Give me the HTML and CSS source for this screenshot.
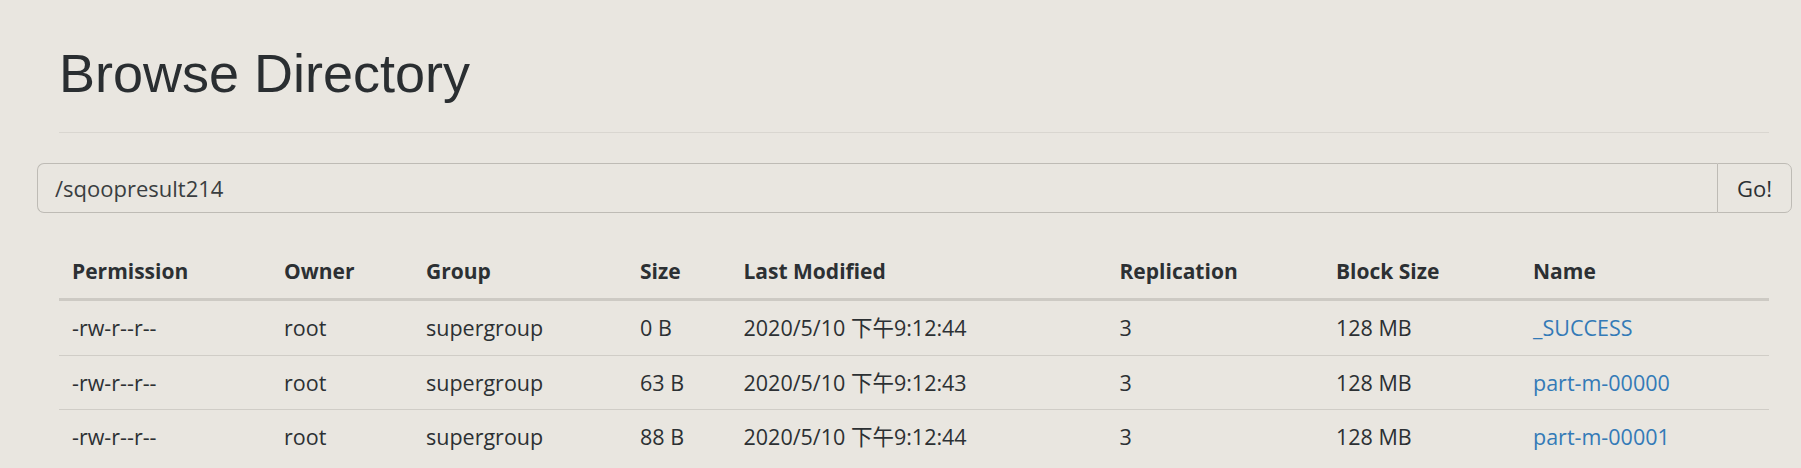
FILE: index.html
```html
<!DOCTYPE html>
<html lang="en">
<head>
<meta charset="utf-8">
<title>Browse Directory</title>
<link rel="stylesheet" href="styles.css">
</head>
<body>
<div class="page">
  <div class="page-header">
    <h1>Browse Directory</h1>
  </div>
  <form class="input-group">
    <input class="path-input" type="text" value="/sqoopresult214">
    <button class="go-btn" type="button">Go!</button>
  </form>
  <table class="listing">
    <colgroup>
      <col class="c-perm"><col class="c-owner"><col class="c-group"><col class="c-size">
      <col class="c-mod"><col class="c-repl"><col class="c-block"><col class="c-name">
    </colgroup>
    <thead>
      <tr>
        <th>Permission</th><th>Owner</th><th>Group</th><th>Size</th>
        <th>Last Modified</th><th>Replication</th><th>Block Size</th><th>Name</th>
      </tr>
    </thead>
    <tbody>
      <tr>
        <td>-rw-r--r--</td><td>root</td><td>supergroup</td><td>0 B</td>
        <td>2020/5/10 下午9:12:44</td><td>3</td><td>128 MB</td><td><a href="#">_SUCCESS</a></td>
      </tr>
      <tr>
        <td>-rw-r--r--</td><td>root</td><td>supergroup</td><td>63 B</td>
        <td>2020/5/10 下午9:12:43</td><td>3</td><td>128 MB</td><td><a href="#">part-m-00000</a></td>
      </tr>
      <tr>
        <td>-rw-r--r--</td><td>root</td><td>supergroup</td><td>88 B</td>
        <td>2020/5/10 下午9:12:44</td><td>3</td><td>128 MB</td><td><a href="#">part-m-00001</a></td>
      </tr>
    </tbody>
  </table>
</div>
</body>
</html>
```

FILE: styles.css
```css
html, body {
  margin: 0;
  padding: 0;
  background: #e9e6e0;
}

body {
  font-family: "Open Sans", "Noto Sans CJK SC", sans-serif;
  font-size: 21.5px;
  color: #2c3033;
}

.page {
  padding: 0 32px 0 59px;
}

.page-header {
  padding: 44px 0 28.6px;
  border-bottom: 1px solid #d9d6d0;
}

.page-header h1 {
  margin: 0;
  font-family: "Liberation Sans", Arial, sans-serif;
  font-weight: 400;
  font-size: 54px;
  line-height: 59.4px;
  color: #2a2e31;
}

.input-group {
  display: flex;
  margin: 30px -23px 0 -22px;
  height: 50px;
}

.path-input {
  flex: 1;
  min-width: 0;
  box-sizing: border-box;
  height: 50px;
  margin: 0;
  padding: 0 17px;
  border: 1px solid #bebbb5;
  border-right: 0;
  border-radius: 7px 0 0 7px;
  background: #e9e6e0;
  font-family: "Open Sans", sans-serif;
  font-size: 22px;
  color: #3a3e41;
  outline: none;
}

.go-btn {
  box-sizing: border-box;
  width: 75px;
  height: 50px;
  margin: 0;
  padding: 0;
  border: 1px solid #bebbb5;
  border-radius: 0 7px 7px 0;
  background: #e9e6e0;
  font-family: "Open Sans", sans-serif;
  font-size: 22px;
  color: #2c3033;
}

.listing {
  width: 1710px;
  margin-top: 31.5px;
  border-collapse: collapse;
  table-layout: fixed;
}

.c-perm { width: 212px; }
.c-owner { width: 142px; }
.c-group { width: 214px; }
.c-size { width: 103.5px; }
.c-mod { width: 376px; }
.c-repl { width: 216.5px; }
.c-block { width: 197px; }
.c-name { width: 249px; }

.listing th,
.listing td {
  padding: 12px 12px 12px 13px;
  line-height: 29.6px;
  text-align: left;
  white-space: nowrap;
}

.listing th {
  font-size: 21px;
  font-weight: 700;
  border-bottom: 3px solid #cdcac4;
}

.listing tbody tr + tr td {
  border-top: 1px solid #d0cdc7;
}

.listing a {
  color: #337ab7;
  text-decoration: none;
}
```
